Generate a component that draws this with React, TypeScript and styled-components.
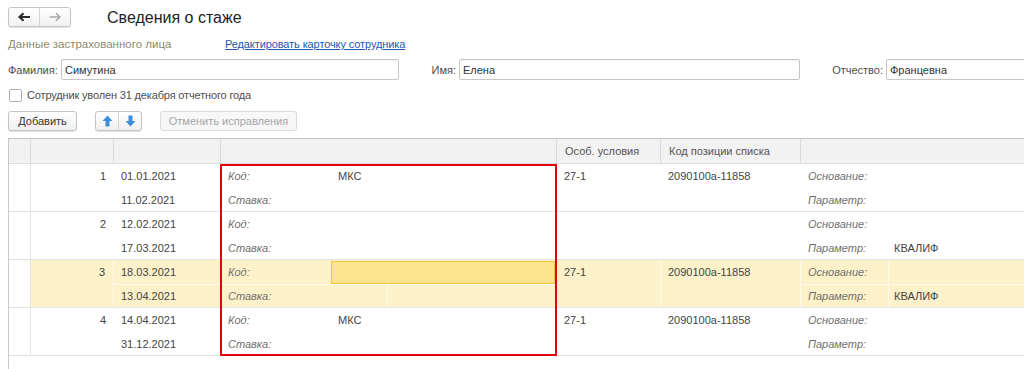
import styled, { createGlobalStyle, css } from "styled-components";

const GlobalStyle = createGlobalStyle`
  html, body {
    margin: 0;
    padding: 0;
    background: #ffffff;
  }
  body {
    font-family: "Liberation Sans", Arial, sans-serif;
    font-size: 12px;
    color: #4d4d4d;
  }
`;

type Row = {
  n: number;
  from: string;
  to: string;
  kod: string;
  cond: string;
  pos: string;
  param: string;
  current?: boolean;
};

const rows: Row[] = [
  { n: 1, from: "01.01.2021", to: "11.02.2021", kod: "МКС", cond: "27-1", pos: "2090100а-11858", param: "" },
  { n: 2, from: "12.02.2021", to: "17.03.2021", kod: "", cond: "", pos: "", param: "КВАЛИФ" },
  { n: 3, from: "18.03.2021", to: "13.04.2021", kod: "", cond: "27-1", pos: "2090100а-11858", param: "КВАЛИФ", current: true },
  { n: 4, from: "14.04.2021", to: "31.12.2021", kod: "МКС", cond: "27-1", pos: "2090100а-11858", param: "" },
];

const COLS = "22px 83px 107px 110px 57px 169px 104px 140px 88px 1fr";

const App = () => {
  return (
    <>
      <GlobalStyle />
      <Page>
        <TopBar>
          <NavGroup>
            <NavButton>
              <svg width="12" height="10" viewBox="0 0 12 10">
                <path d="M2 5h10M5.5 1.2L1.5 5l4 3.8" stroke="#2b2b2b" strokeWidth="2.2" fill="none" />
              </svg>
            </NavButton>
            <NavButton>
              <svg width="12" height="10" viewBox="0 0 12 10">
                <path d="M0.5 5H10.5M7 1.3l3.8 3.7L7 8.7" stroke="#a8a8a8" strokeWidth="1.6" fill="none" />
              </svg>
            </NavButton>
          </NavGroup>
          <Title>Сведения о стаже</Title>
        </TopBar>

        <InfoRow>
          <Muted>Данные застрахованного лица</Muted>
          <Link>Редактировать карточку сотрудника</Link>
        </InfoRow>

        <NameRow>
          <Label>Фамилия:</Label>
          <Field>Симутина</Field>
          <Label $right>Имя:</Label>
          <Field>Елена</Field>
          <Label $right>Отчество:</Label>
          <Field>Францевна</Field>
        </NameRow>

        <CheckRow>
          <Box />
          <span>Сотрудник уволен 31 декабря отчетного года</span>
        </CheckRow>

        <ButtonRow>
          <Button $w={69}>Добавить</Button>
          <Split>
            <SplitPart>
              <svg width="11" height="12" viewBox="0 0 11 12">
                <path d="M5.5 0.5L10.5 6H7.5V11.5H3.5V6H0.5Z" fill="#3c8fd8" />
              </svg>
            </SplitPart>
            <SplitPart>
              <svg width="11" height="12" viewBox="0 0 11 12">
                <path d="M5.5 11.5L10.5 6H7.5V0.5H3.5V6H0.5Z" fill="#3c8fd8" />
              </svg>
            </SplitPart>
          </Split>
          <Button $w={137} $disabled>
            Отменить исправления
          </Button>
        </ButtonRow>

        <Table>
          <HeadRow>
            <HeadCell />
            <HeadCell />
            <HeadCell />
            <HeadCell $span={3} />
            <HeadCell>Особ. условия</HeadCell>
            <HeadCell>Код позиции списка</HeadCell>
            <HeadCell $span={2} $last />
          </HeadRow>

          <Body>
            {rows.map((r) => (
              <DataRow key={r.n} $current={r.current}>
                <Cell $row="1 / 3" $edge />
                <Cell $row="1 / 3" $right $current={r.current}>
                  {r.n}
                </Cell>
                <Cell $current={r.current}>{r.from}</Cell>
                <Cell $col="3" $row="2" $current={r.current} $top={r.current}>
                  {r.to}
                </Cell>
                <Cell $col="4">
                  <Hint>Код:</Hint>
                </Cell>
                <Cell $col="5 / 7">
                  {r.current ? <Selected /> : r.kod}
                </Cell>
                <Cell $col="4 / 6" $row="2" $current={r.current} $top={r.current}>
                  <Hint>Ставка:</Hint>
                </Cell>
                <Cell $col="6" $row="2" $top={r.current} />
                <Cell $col="7" $row="1 / 3" $current={r.current}>
                  {r.cond}
                </Cell>
                <Cell $col="8" $row="1 / 3" $current={r.current}>
                  {r.pos}
                </Cell>
                <Cell $col="9" $current={r.current}>
                  <Hint>Основание:</Hint>
                </Cell>
                <Cell $col="10" />
                <Cell $col="9" $row="2" $current={r.current} $top={r.current}>
                  <Hint>Параметр:</Hint>
                </Cell>
                <Cell $col="10" $row="2" $top={r.current} $tight>
                  {r.param}
                </Cell>
              </DataRow>
            ))}
            <Marker />
          </Body>
          <Tail />
        </Table>
      </Page>
    </>
  );
};

const Page = styled.div`
  width: 1024px;
  height: 369px;
  overflow: hidden;
  box-sizing: border-box;
  padding: 7px 0 0 8px;
  display: flex;
  flex-direction: column;
`;

const TopBar = styled.div`
  display: flex;
  align-items: center;
  gap: 36px;
  height: 20px;
`;

const NavGroup = styled.div`
  display: flex;
  border: 1px solid #c4c4c4;
  border-radius: 3px;
  box-shadow: 0 1px 1px rgba(0, 0, 0, 0.12);
  background: linear-gradient(#ffffff, #f1f1f1);
`;

const NavButton = styled.div`
  width: 30px;
  height: 18px;
  display: flex;
  align-items: center;
  justify-content: center;

  & + & {
    border-left: 1px solid #d4d4d4;
  }
`;

const Title = styled.span`
  font-size: 16px;
  color: #222;
  margin-top: 1px;
`;

const InfoRow = styled.div`
  display: flex;
  align-items: center;
  height: 16px;
  margin-top: 9px;
  font-size: 11px;
`;

const Muted = styled.span`
  width: 217px;
  font-size: 11.5px;
  color: #8b8b70;
`;

const Link = styled.span`
  color: #2458b3;
  text-decoration: underline;
  letter-spacing: -0.1px;
`;

const NameRow = styled.div`
  display: grid;
  grid-template-columns: 53px 338px 60px 341px 86px 160px;
  align-items: center;
  height: 21px;
  margin-top: 7px;
  font-size: 11px;
`;

const Label = styled.span<{ $right?: boolean }>`
  color: #4d4d4d;
  text-align: ${(p) => (p.$right ? "right" : "left")};
  padding-right: 3px;
`;

const Field = styled.div`
  height: 19px;
  border: 1px solid #c6c6c6;
  border-radius: 2px;
  box-shadow: inset 0 1px 1px rgba(0, 0, 0, 0.05);
  display: flex;
  align-items: center;
  padding-left: 3px;
  color: #333;
`;

const CheckRow = styled.div`
  display: flex;
  align-items: center;
  gap: 5px;
  height: 14px;
  margin-top: 8px;
  padding-left: 1px;
  font-size: 11px;
  letter-spacing: -0.15px;
`;

const Box = styled.div`
  width: 11px;
  height: 11px;
  border: 1px solid #b0b0b0;
  border-radius: 2px;
  background: #fff;
`;

const ButtonRow = styled.div`
  display: flex;
  align-items: center;
  gap: 18px;
  height: 20px;
  margin-top: 9px;
  font-size: 11px;
`;

const buttonSkin = css`
  border: 1px solid #c4c4c4;
  border-radius: 3px;
  background: linear-gradient(#ffffff, #f0f0f0);
  box-shadow: 0 1px 1px rgba(0, 0, 0, 0.12);
`;

const Button = styled.div<{ $w: number; $disabled?: boolean }>`
  ${buttonSkin}
  box-sizing: border-box;
  width: ${(p) => p.$w}px;
  height: 20px;
  display: flex;
  align-items: center;
  justify-content: center;
  color: ${(p) => (p.$disabled ? "#a6a6a6" : "#333")};
  ${(p) =>
    p.$disabled &&
    css`
      border-color: #dadada;
      box-shadow: none;
      background: #f7f7f7;
    `}
`;

const Split = styled.div`
  ${buttonSkin}
  display: flex;
  height: 18px;
`;

const SplitPart = styled.div`
  width: 22px;
  display: flex;
  align-items: center;
  justify-content: center;

  & + & {
    border-left: 1px solid #d4d4d4;
  }
`;

const Table = styled.div`
  margin-top: 7px;
  flex: 1;
  display: flex;
  flex-direction: column;
  border-top: 1px solid #c2c2c2;
  border-left: 1px solid #c8c8c8;
  font-size: 11px;
  color: #444;
`;

const HeadRow = styled.div`
  display: grid;
  grid-template-columns: ${COLS};
  height: 24px;
  background: #f2f2f2;
  border-bottom: 1px solid #dedede;
`;

const HeadCell = styled.div<{ $span?: number; $last?: boolean }>`
  grid-column: span ${(p) => p.$span ?? 1};
  display: flex;
  align-items: center;
  padding-left: 8px;
  color: #555;
  border-right: ${(p) => (p.$last ? "none" : "1px solid #d9d9d9")};
`;

const Body = styled.div`
  position: relative;
`;

const DataRow = styled.div<{ $current?: boolean }>`
  display: grid;
  grid-template-columns: ${COLS};
  grid-template-rows: 24px 23px;
  border-bottom: 1px solid #e4e4e4;
  background: ${(p) => (p.$current ? "#fdf1c9" : "#fff")};
`;

const Cell = styled.div<{
  $col?: string;
  $row?: string;
  $right?: boolean;
  $edge?: boolean;
  $current?: boolean;
  $top?: boolean;
  $tight?: boolean;
}>`
  grid-column: ${(p) => p.$col ?? "auto"};
  grid-row: ${(p) => p.$row ?? "1"};
  display: flex;
  align-items: ${(p) => (p.$row === "1 / 3" ? "flex-start" : "center")};
  padding-top: ${(p) => (p.$row === "1 / 3" ? "6px" : "0")};
  justify-content: ${(p) => (p.$right ? "flex-end" : "flex-start")};
  padding-left: ${(p) => (p.$right ? "0" : p.$tight ? "5px" : "7px")};
  padding-right: ${(p) => (p.$right ? "8px" : "0")};
  box-sizing: border-box;
  color: #444;
  position: relative;
  ${(p) =>
    p.$edge &&
    css`
      border-right: 1px solid #e2e2e2;
      background: #fff;
    `}
  ${(p) =>
    p.$current &&
    css`
      border-right: 1px solid #fffaf0;
    `}
  ${(p) =>
    p.$top &&
    css`
      border-top: 1px solid #fffaf0;
    `}
`;

const Hint = styled.span`
  font-style: italic;
  color: #707070;
`;

const Selected = styled.div`
  position: absolute;
  left: 0;
  right: 2px;
  top: 1px;
  bottom: 0;
  background: #fce48f;
  border: 1px solid #f3c33c;
`;

const Marker = styled.div`
  position: absolute;
  left: 211px;
  top: 0;
  width: 337px;
  height: 192px;
  box-sizing: border-box;
  border: 2px solid #e3000f;
  pointer-events: none;
`;

const Tail = styled.div`
  flex: 1;
`;

export default App;
